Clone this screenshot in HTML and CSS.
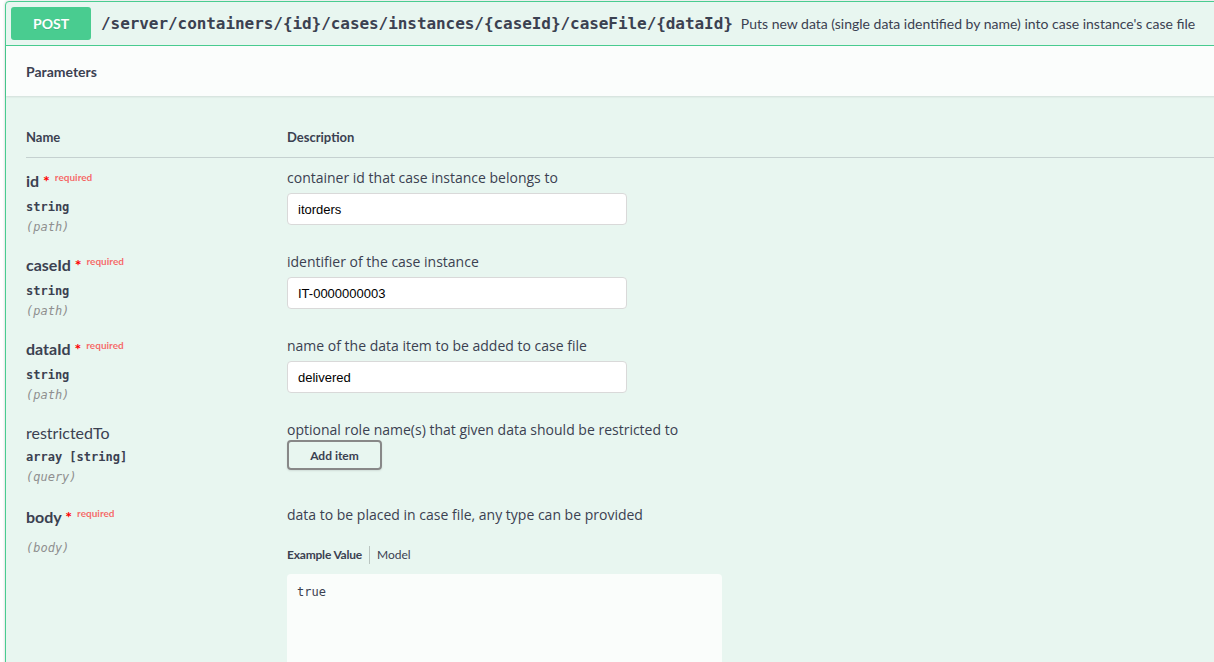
FILE: index.html
```html
<!DOCTYPE html>
<html>
<head>
<meta charset="utf-8">
<title>POST caseFile</title>
<link rel="stylesheet" href="styles.css">
</head>
<body>
<div class="page">
  <div class="opblock">
    <div class="summary">
      <span class="method">POST</span>
      <span class="path">/server/containers/{id}/cases/instances/{caseId}/caseFile/{dataId}</span>
      <span class="summary-desc">Puts new data (single data identified by name) into case instance's case file</span>
    </div>
    <div class="section-header"><h4>Parameters</h4></div>
    <div class="params">
      <div class="prow phead">
        <div class="pcol-name">Name</div>
        <div class="pcol-desc">Description</div>
      </div>

      <div class="prow">
        <div class="pcol-name">
          <div class="pname required">id<span class="star">&nbsp;*</span><span class="req">required</span></div>
          <div class="ptype">string</div>
          <div class="pin">(path)</div>
        </div>
        <div class="pcol-desc">
          <p class="pdesc">container id that case instance belongs to</p>
          <input class="pinput" type="text" value="itorders">
        </div>
      </div>

      <div class="prow">
        <div class="pcol-name">
          <div class="pname required">caseId<span class="star">&nbsp;*</span><span class="req">required</span></div>
          <div class="ptype">string</div>
          <div class="pin">(path)</div>
        </div>
        <div class="pcol-desc">
          <p class="pdesc">identifier of the case instance</p>
          <input class="pinput" type="text" value="IT-0000000003">
        </div>
      </div>

      <div class="prow">
        <div class="pcol-name">
          <div class="pname required">dataId<span class="star">&nbsp;*</span><span class="req">required</span></div>
          <div class="ptype">string</div>
          <div class="pin">(path)</div>
        </div>
        <div class="pcol-desc">
          <p class="pdesc">name of the data item to be added to case file</p>
          <input class="pinput" type="text" value="delivered">
        </div>
      </div>

      <div class="prow">
        <div class="pcol-name">
          <div class="pname">restrictedTo</div>
          <div class="ptype">array [string]</div>
          <div class="pin">(query)</div>
        </div>
        <div class="pcol-desc">
          <p class="pdesc">optional role name(s) that given data should be restricted to</p>
          <button class="add-btn" type="button">Add item</button>
        </div>
      </div>

      <div class="prow">
        <div class="pcol-name">
          <div class="pname required">body<span class="star">&nbsp;*</span><span class="req">required</span></div>
          <div class="pin pin-body">(body)</div>
        </div>
        <div class="pcol-desc">
          <p class="pdesc pdesc-body">data to be placed in case file, any type can be provided</p>
          <div class="tabs">
            <span class="tab active">Example Value</span>
            <span class="tab">Model</span>
          </div>
          <div class="example"><pre>true</pre></div>
        </div>
      </div>
    </div>
  </div>
</div>
</body>
</html>
```

FILE: styles.css
```css
html, body {
  margin: 0;
  padding: 0;
  background: #ffffff;
  overflow: hidden;
}

.page {
  height: 662px;
  overflow: hidden;
  padding: 1px 0 0 5px;
  box-sizing: border-box;
  color: #3b4151;
}

.opblock {
  margin-right: -30px;
  border: 1px solid #49cc90;
  border-radius: 4px;
  background: #e8f6f0;
  box-shadow: 0 0 3px rgba(0, 0, 0, 0.19);
  min-height: 760px;
}

.summary {
  display: flex;
  align-items: center;
  padding: 5px;
  border-bottom: 1px solid #49cc90;
}

.method {
  display: inline-block;
  min-width: 80px;
  box-sizing: border-box;
  padding: 6px 15px;
  line-height: 21px;
  text-align: center;
  border-radius: 3px;
  background: #49cc90;
  color: #ffffff;
  font-family: Lato, "Open Sans", sans-serif;
  font-weight: 700;
  font-size: 14px;
  text-shadow: 0 1px 0 rgba(0, 0, 0, 0.1);
}

.path {
  padding: 0 8px 0 10px;
  font-family: "DejaVu Sans Mono", "Liberation Mono", monospace;
  font-weight: 700;
  font-size: 16px;
  letter-spacing: -0.06px;
  color: #3b4151;
}

.summary-desc {
  flex: 1;
  font-family: Lato, "Open Sans", sans-serif;
  font-size: 14px;
  color: #3b4151;
  white-space: nowrap;
}

.section-header {
  display: flex;
  align-items: center;
  box-sizing: border-box;
  min-height: 50px;
  padding: 8px 20px;
  background: rgba(255, 255, 255, 0.8);
  box-shadow: 0 1px 2px rgba(0, 0, 0, 0.1);
}

.section-header h4 {
  margin: 0;
  font-family: Lato, "Open Sans", sans-serif;
  font-weight: 700;
  font-size: 14px;
  color: #3b4151;
}

.params {
  padding: 20px 0 0 20px;
}

.prow {
  display: grid;
  grid-template-columns: 261px 1fr;
}

.phead {
  padding: 13px 0 12px;
  border-bottom: 1px solid rgba(59, 65, 81, 0.2);
  font-family: Lato, "Open Sans", sans-serif;
  font-weight: 700;
  font-size: 13px;
  line-height: 16px;
}

.prow:not(.phead) {
  height: 84px;
  padding-top: 11px;
  box-sizing: border-box;
}

.pname {
  font-family: Lato, "Open Sans", sans-serif;
  font-size: 16px;
  line-height: 24px;
  font-weight: 400;
  white-space: nowrap;
}

.pname.required {
  font-weight: 700;
}

.star {
  color: red;
}

.req {
  position: relative;
  top: -6px;
  padding: 5px;
  font-size: 10px;
  font-weight: 700;
  color: rgba(255, 0, 0, 0.6);
}

.ptype {
  margin-top: 4px;
  font-family: "DejaVu Sans Mono", "Liberation Mono", monospace;
  font-size: 12px;
  font-weight: 700;
  line-height: 16px;
}

.pin {
  margin-top: 4px;
  font-family: "DejaVu Sans Mono", "Liberation Mono", monospace;
  font-size: 12px;
  font-style: italic;
  font-weight: 400;
  line-height: 16px;
  color: #8f8f8f;
}

.pin-body {
  margin-top: 9px;
}

.pdesc {
  margin: 0;
  font-family: "Open Sans", sans-serif;
  font-size: 14px;
  line-height: 18px;
  color: #3b4151;
}

.pdesc-body {
  margin-top: 1px;
}

.pinput {
  display: block;
  box-sizing: border-box;
  width: 340px;
  height: 32px;
  margin-top: 6px;
  padding: 8px 10px;
  border: 1px solid #d9d9d9;
  border-radius: 4px;
  background: #ffffff;
  font-family: "Liberation Sans", Arial, sans-serif;
  font-size: 13px;
  color: #000000;
  outline: none;
}

.add-btn {
  display: block;
  box-sizing: border-box;
  width: 95px;
  height: 30px;
  margin-top: 1px;
  padding: 0;
  border: 2px solid #888888;
  border-radius: 4px;
  background: transparent;
  box-shadow: 0 1px 2px rgba(0, 0, 0, 0.1);
  font-family: Lato, "Open Sans", sans-serif;
  font-weight: 700;
  font-size: 12px;
  color: #3b4151;
}

.tabs {
  display: flex;
  align-items: center;
  margin-top: 22px;
  font-family: Lato, "Open Sans", sans-serif;
  font-size: 12px;
  line-height: 16px;
}

.tab {
  padding: 1px 6px 1px 7px;
  color: #3b4151;
}

.tab:first-child {
  padding-left: 0;
  padding-right: 7px;
  border-right: 1px solid rgba(0, 0, 0, 0.2);
}

.tab.active {
  font-weight: 700;
  letter-spacing: -0.2px;
}

.example {
  box-sizing: border-box;
  width: 435px;
  min-height: 140px;
  margin-top: 10px;
  padding: 10px;
  border-radius: 4px;
  background: #fafdfb;
}

.example pre {
  margin: 0;
  font-family: "DejaVu Sans Mono", "Liberation Mono", monospace;
  font-size: 12px;
  font-weight: 400;
  line-height: 16px;
  color: #3b4151;
}
```
